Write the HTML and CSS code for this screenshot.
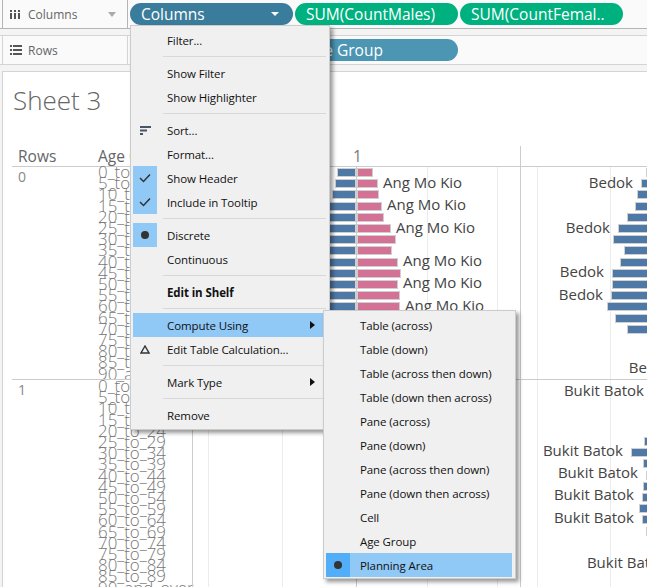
FILE: index.html
```html
<!DOCTYPE html>
<html lang="en">

<head>
	<meta charset="UTF-8">
	<title>Sheet 3</title>
	<link rel="stylesheet" href="styles.css">
</head>

<body>
	<div class="shelf shelf-columns">
		<div class="shelf-label">
			<svg class="shelf-icon" width="10" height="9" viewBox="0 0 10 9">
				<path d="M0 0h2v2H0zM0 3h2v6H0zM4 0h2v2H4zM4 3h2v6H4zM8 0h2v2H8zM8 3h2v6H8z" fill="#555"/>
			</svg>
			<span>Columns</span>
			<span class="shelf-caret"></span>
		</div>
		<div class="pill pill-dim">Columns<span class="pill-caret"></span></div>
		<div class="pill pill-measure">SUM(CountMales)</div>
		<div class="pill pill-measure">SUM(CountFemal..</div>
	</div>

	<div class="shelf shelf-rows">
		<div class="shelf-label">
			<svg class="shelf-icon" width="12" height="10" viewBox="0 0 12 10">
				<path d="M0 0h2v2H0zM3 0h9v2H3zM0 4h2v2H0zM3 4h9v2H3zM0 8h2v2H0zM3 8h9v2H3z" fill="#555"/>
			</svg>
			<span>Rows</span>
		</div>
		<div class="pill pill-row">Rows</div>
		<div class="pill pill-row">Age Group</div>
	</div>

	<div class="sheet">
		<h1 class="sheet-title">Sheet 3</h1>
		<div class="viz">
			<div class="head head-first">Rows</div>
			<div class="head">Age Group</div>
			<div class="head head-pane head-center">1</div>
			<div class="head head-pane"></div>

			<!-- row 0 -->
			<div class="row-name">0</div>
			<div class="ages">
				<div>0_to_4</div>
				<div>5_to_9</div>
				<div>10_to_14</div>
				<div>15_to_19</div>
				<div>20_to_24</div>
				<div>25_to_29</div>
				<div>30_to_34</div>
				<div>35_to_39</div>
				<div>40_to_44</div>
				<div>45_to_49</div>
				<div>50_to_54</div>
				<div>55_to_59</div>
				<div>60_to_64</div>
				<div>65_to_69</div>
				<div>70_to_74</div>
				<div>75_to_79</div>
				<div>80_to_84</div>
				<div>85_to_89</div>
				<div>90_and_over</div>
			</div>
			<div class="pane pane-center">
				<div class="mark-row"><div class="males"><div class="bar blue" style="width:19px"></div></div><div class="bar pink" style="width:16px"></div></div>
				<div class="mark-row"><div class="males"><div class="bar blue" style="width:21px"></div></div><div class="bar pink" style="width:21px"></div><span class="mark-label">Ang Mo Kio</span></div>
				<div class="mark-row"><div class="males"><div class="bar blue" style="width:24px"></div></div><div class="bar pink" style="width:22px"></div></div>
				<div class="mark-row"><div class="males"><div class="bar blue" style="width:28px"></div></div><div class="bar pink" style="width:25px"></div><span class="mark-label">Ang Mo Kio</span></div>
				<div class="mark-row"><div class="males"><div class="bar blue" style="width:30px"></div></div><div class="bar pink" style="width:27px"></div></div>
				<div class="mark-row"><div class="males"><div class="bar blue" style="width:34px"></div></div><div class="bar pink" style="width:34px"></div><span class="mark-label">Ang Mo Kio</span></div>
				<div class="mark-row"><div class="males"><div class="bar blue" style="width:36px"></div></div><div class="bar pink" style="width:39px"></div></div>
				<div class="mark-row"><div class="males"><div class="bar blue" style="width:34px"></div></div><div class="bar pink" style="width:35px"></div></div>
				<div class="mark-row"><div class="males"><div class="bar blue" style="width:38px"></div></div><div class="bar pink" style="width:41px"></div><span class="mark-label">Ang Mo Kio</span></div>
				<div class="mark-row"><div class="males"><div class="bar blue" style="width:40px"></div></div><div class="bar pink" style="width:44px"></div></div>
				<div class="mark-row"><div class="males"><div class="bar blue" style="width:38px"></div></div><div class="bar pink" style="width:41px"></div><span class="mark-label">Ang Mo Kio</span></div>
				<div class="mark-row"><div class="males"><div class="bar blue" style="width:38px"></div></div><div class="bar pink" style="width:43px"></div></div>
				<div class="mark-row"><div class="males"><div class="bar blue" style="width:36px"></div></div><div class="bar pink" style="width:43px"></div><span class="mark-label">Ang Mo Kio</span></div>
			</div>
			<div class="pane pane-right">
				<div class="mark-row"><div class="bar blue" style="width:64px"></div></div>
				<div class="mark-row"><span class="mark-label">Bedok</span><div class="bar blue" style="width:69px"></div></div>
				<div class="mark-row"><div class="bar blue" style="width:73px"></div></div>
				<div class="mark-row"><div class="bar blue" style="width:75px"></div></div>
				<div class="mark-row"><div class="bar blue" style="width:83px"></div></div>
				<div class="mark-row"><span class="mark-label">Bedok</span><div class="bar blue" style="width:92px"></div></div>
				<div class="mark-row"><div class="bar blue" style="width:97px"></div></div>
				<div class="mark-row"><div class="bar blue" style="width:86px"></div></div>
				<div class="mark-row"><div class="bar blue" style="width:90px"></div></div>
				<div class="mark-row"><span class="mark-label">Bedok</span><div class="bar blue" style="width:98px"></div></div>
				<div class="mark-row"><div class="bar blue" style="width:98px"></div></div>
				<div class="mark-row"><span class="mark-label">Bedok</span><div class="bar blue" style="width:99px"></div></div>
				<div class="mark-row"><div class="bar blue" style="width:103px"></div></div>
				<div class="mark-row"><div class="bar blue" style="width:95px"></div></div>
				<div class="mark-row"><div class="bar blue" style="width:83px"></div></div>
				<div class="mark-row"></div>
				<div class="mark-row"></div>
				<div class="mark-row"><span class="mark-label label-low">Bedok</span><div class="bar blue" style="width:29px"></div></div>
			</div>

			<!-- row 1 -->
			<div class="row-name row-name-next">1</div>
			<div class="ages ages-next">
				<div>0_to_4</div>
				<div>5_to_9</div>
				<div>10_to_14</div>
				<div>15_to_19</div>
				<div>20_to_24</div>
				<div>25_to_29</div>
				<div>30_to_34</div>
				<div>35_to_39</div>
				<div>40_to_44</div>
				<div>45_to_49</div>
				<div>50_to_54</div>
				<div>55_to_59</div>
				<div>60_to_64</div>
				<div>65_to_69</div>
				<div>70_to_74</div>
				<div>75_to_79</div>
				<div>80_to_84</div>
				<div>85_to_89</div>
				<div>90_and_over</div>
			</div>
			<div class="pane pane-center pane-next">
				<div class="mark-row"></div>
				<div class="mark-row"></div>
				<div class="mark-row"></div>
				<div class="mark-row"></div>
				<div class="mark-row"></div>
				<div class="mark-row"></div>
				<div class="mark-row"></div>
				<div class="mark-row"></div>
				<div class="mark-row"></div>
				<div class="mark-row"></div>
				<div class="mark-row"></div>
				<div class="mark-row"></div>
				<div class="mark-row"></div>
				<div class="mark-row"></div>
				<div class="mark-row"></div>
				<div class="mark-row"></div>
				<div class="mark-row"></div>
				<div class="mark-row"><div class="males"></div><span class="mark-label label-high">Boon Lay</span></div>
			</div>
			<div class="pane pane-right pane-next">
				<div class="mark-row"><span class="mark-label label-low">Bukit Batok</span><div class="bar blue" style="width:58px"></div></div>
				<div class="mark-row"></div>
				<div class="mark-row"></div>
				<div class="mark-row"></div>
				<div class="mark-row"></div>
				<div class="mark-row"><div class="bar blue" style="width:66px"></div></div>
				<div class="mark-row"><span class="mark-label label-up">Bukit Batok</span><div class="bar blue" style="width:79px"></div></div>
				<div class="mark-row"><div class="bar blue" style="width:67px"></div></div>
				<div class="mark-row"><span class="mark-label label-up">Bukit Batok</span><div class="bar blue" style="width:64px"></div></div>
				<div class="mark-row"><div class="bar blue" style="width:67px"></div></div>
				<div class="mark-row"><span class="mark-label label-up">Bukit Batok</span><div class="bar blue" style="width:68px"></div></div>
				<div class="mark-row"><div class="bar blue" style="width:71px"></div></div>
				<div class="mark-row"><span class="mark-label label-up">Bukit Batok</span><div class="bar blue" style="width:68px"></div></div>
				<div class="mark-row"><div class="bar blue" style="width:64px"></div></div>
				<div class="mark-row"></div>
				<div class="mark-row"></div>
				<div class="mark-row"><span class="mark-label label-up">Bukit Batok</span><div class="bar blue" style="width:35px"></div></div>
			</div>
		</div>
	</div>

	<div class="menu menu-main">
		<div class="item">Filter...</div>
		<div class="sep"></div>
		<div class="item">Show Filter</div>
		<div class="item">Show Highlighter</div>
		<div class="sep"></div>
		<div class="item">
			<span class="gutter">
				<svg width="11" height="9" viewBox="0 0 11 9"><path d="M0 0h11v2H0zM0 3.500h7v2H0zM0 7h3v2H0z" fill="#4a5468"/></svg>
			</span>Sort...
		</div>
		<div class="item">Format...</div>
		<div class="item">
			<span class="gutter gutter-on">
				<svg width="12" height="10" viewBox="0 0 12 10"><path d="M1 5l3.500 3.500L11 1.500" fill="none" stroke="#333" stroke-width="1.500"/></svg>
			</span>Show Header
		</div>
		<div class="item">
			<span class="gutter gutter-on">
				<svg width="12" height="10" viewBox="0 0 12 10"><path d="M1 5l3.500 3.500L11 1.500" fill="none" stroke="#333" stroke-width="1.500"/></svg>
			</span>Include in Tooltip
		</div>
		<div class="sep"></div>
		<div class="item"><span class="gutter gutter-on"><span class="dot"></span></span>Discrete</div>
		<div class="item">Continuous</div>
		<div class="sep"></div>
		<div class="item item-bold">Edit in Shelf</div>
		<div class="sep"></div>
		<div class="item item-hot">Compute Using<span class="arrow"></span></div>
		<div class="item">
			<span class="gutter">
				<svg width="10" height="9" viewBox="0 0 10 9"><path d="M5 1L1 8h8z" fill="none" stroke="#333" stroke-width="1.400"/></svg>
			</span>Edit Table Calculation...
		</div>
		<div class="sep"></div>
		<div class="item">Mark Type<span class="arrow"></span></div>
		<div class="sep"></div>
		<div class="item">Remove</div>
	</div>

	<div class="menu menu-sub">
		<div class="item">Table (across)</div>
		<div class="item">Table (down)</div>
		<div class="item">Table (across then down)</div>
		<div class="item">Table (down then across)</div>
		<div class="item">Pane (across)</div>
		<div class="item">Pane (down)</div>
		<div class="item">Pane (across then down)</div>
		<div class="item">Pane (down then across)</div>
		<div class="item">Cell</div>
		<div class="item">Age Group</div>
		<div class="item item-hot"><span class="gutter gutter-hot"><span class="dot"></span></span>Planning Area</div>
	</div>
</body>

</html>
```

FILE: styles.css
```css
html,
body {
	margin: 0;
	height: 100%;
	overflow: hidden;
}

body {
	width: 647px;
	height: 587px;
	position: relative;
	background-color: #f4f4f4;
	font-family: "Open Sans", "Noto Sans", sans-serif;
	color: #555;
}

/* shelves */
.shelf {
	display: flex;
	box-sizing: border-box;
	align-items: center;
	gap: 2px;
	background-color: #fafafa;
}

.shelf-columns {
	height: 29px;
	padding-top: 3px;
	padding-bottom: 3px;
	border-bottom: 1px solid #b4b4b4;
}

.shelf-rows {
	height: 30px;
	margin-top: 6px;
	border-top: 1px solid #d4d4d4;
	border-bottom: 1px solid #d4d4d4;
}

.shelf-label {
	display: flex;
	box-sizing: border-box;
	align-items: center;
	flex: none;
	width: 126px;
	margin-left: 2px;
	padding-left: 7px;
	border: 1px solid #d4d4d4;
	border-width: 0 1px 0 1px;
	font-size: 12px;
	color: #666;
}

.shelf-columns .shelf-label {
	align-self: flex-start;
	height: 28px;
	margin-top: -3px;
	border-color: #b4b4b4;
}

.shelf-rows .shelf-label {
	height: 100%;
}

.shelf-icon {
	margin-right: 8px;
}

.shelf-rows .shelf-icon {
	margin-right: 6px;
}

.shelf-caret {
	margin-left: auto;
	margin-right: 11px;
	border: 4px solid transparent;
	border-top: 5px solid #aaa;
	border-bottom: 0;
}

.pill {
	display: flex;
	box-sizing: border-box;
	align-items: center;
	flex: none;
	width: 163px;
	height: 22px;
	padding-left: 11px;
	border-radius: 11px;
	font-size: 15.500px;
	color: #fff;
}

.pill-dim {
	background-color: #397c9b;
}

.pill-measure {
	background-color: #00b180;
}

.pill-row {
	background-color: #4c95b3;
}

.pill-caret {
	margin-left: auto;
	margin-right: 14px;
	border: 4px solid transparent;
	border-top: 4px solid #fff;
	border-bottom: 0;
}

/* sheet */
.sheet {
	height: 516px;
	margin: 6px 0 0 2px;
	padding-left: 9px;
	border-top: 1px solid #d4d4d4;
	border-left: 1px solid #d4d4d4;
	background-color: #fff;
	overflow: hidden;
}

.sheet-title {
	height: 74px;
	margin: 0;
	padding-left: 1px;
	font-size: 26px;
	font-weight: 300;
	line-height: 56px;
	color: #666;
}

.viz {
	display: grid;
	grid-template-columns: 86px 94px 328px 190px;
	grid-template-rows: 21px 212px 214px;
}

.head {
	border-bottom: 1px solid #ccc;
	padding-left: 6px;
	font-size: 15.500px;
	line-height: 21px;
	color: #666;
}

.head + .head {
	padding-left: 0;
}

.head-pane {
	border-left: 1px solid #ccc;
}

.head-center {
	padding-left: 160px !important;
	color: #777;
}

.row-name {
	padding: 2px 0 0 6px;
	font-size: 14px;
	line-height: 16px;
	color: #888;
}

.row-name-next,
.ages-next {
	border-top: 1px solid #ccc;
}

.ages {
	margin-top: -1px;
	font-size: 16.900px;
	font-weight: 300;
	line-height: 11.200px;
	white-space: nowrap;
	color: #777;
}

.ages-next {
	margin-top: 0;
}

/* panes, the faint lines are the axis ticks */
.pane {
	display: flex;
	flex-direction: column;
	border-left: 1px solid #ccc;
	background-repeat: no-repeat;
}

.pane-next {
	border-top: 1px solid #ccc;
}

.pane-center {
	background-image:
		linear-gradient(#ececec, #ececec),
		linear-gradient(#ececec, #ececec),
		linear-gradient(#ccc, #ccc),
		linear-gradient(#ececec, #ececec),
		linear-gradient(#ececec, #ececec);
	background-size: 1px 100%;
	background-position: 15px 0, 89px 0, 163px 0, 234px 0, 304px 0;
}

.pane-right {
	background-image:
		linear-gradient(#ececec, #ececec),
		linear-gradient(#ececec, #ececec);
	background-size: 1px 100%;
	background-position: 16px 0, 89px 0;
}

.mark-row {
	display: flex;
	flex: none;
	align-items: center;
	height: 11.200px;
}

.pane-right .mark-row {
	justify-content: flex-end;
}

.males {
	display: flex;
	flex: none;
	justify-content: flex-end;
	width: 163px;
	margin-right: 1px;
}

.bar {
	box-sizing: border-box;
	flex: none;
	height: 9px;
	border: 1px solid #cfcfcf;
}

.blue {
	background-color: #4e79a7;
}

.pink {
	background-color: #d37295;
}

.mark-label {
	flex: none;
	margin-left: 5px;
	margin-bottom: 4px;
	font-size: 15px;
	line-height: 20px;
	color: #444;
}

.mark-label.label-high {
	margin-bottom: 13px;
}

.pane-right .mark-label {
	margin: 0 8px 4px 0;
}

.pane-right .label-low {
	margin: 8px 8px 0 0;
}

.pane-right .label-up {
	margin: 0 8px 6px 0;
}

/* context menus */
.menu {
	position: absolute;
	box-sizing: border-box;
	padding: 2px 3px 2px 2px;
	background-color: #f0f0f0;
	border: 1px solid #ccc;
	box-shadow: 3px 3px 4px rgba(0, 0, 0, 0.4);
	font-size: 11.500px;
	letter-spacing: -0.100px;
	color: #111;
}

.menu-main {
	left: 130px;
	top: 25px;
	width: 200px;
	height: 405px;
}

.menu-sub {
	left: 323px;
	top: 310px;
	width: 193px;
	height: 269px;
}

.item {
	position: relative;
	display: flex;
	align-items: center;
	height: 24px;
	padding-left: 34px;
	white-space: nowrap;
}

.item-bold {
	font-weight: 700;
}

.item-hot {
	background-color: #90c8f6;
}

.sep {
	height: 1px;
	margin: 4px 0 4px 30px;
	background-color: #d8d8d8;
}

.gutter {
	position: absolute;
	left: 0;
	top: 0;
	display: flex;
	align-items: center;
	justify-content: center;
	width: 24px;
	height: 24px;
}

.gutter-on {
	background-color: #90c8f6;
}

.gutter-hot {
	background-color: #53aef9;
}

.dot {
	width: 8px;
	height: 8px;
	border-radius: 50%;
	background-color: #333;
}

.arrow {
	position: absolute;
	right: 11px;
	top: 8px;
	border: 4px solid transparent;
	border-left: 5px solid #111;
	border-right: 0;
}
```
